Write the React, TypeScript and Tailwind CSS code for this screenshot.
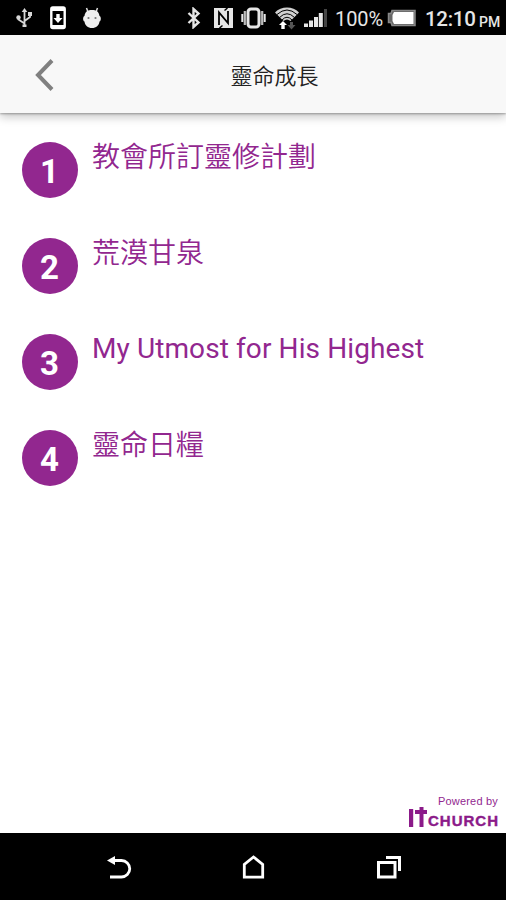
import React from 'react';

const plans = [
    { title: '教會所訂靈修計劃', style: 'mt-[2px] font-[350]' },
    { title: '荒漠甘泉', style: 'mt-[2px] font-[350]' },
    { title: 'My Utmost for His Highest', style: 'mt-px font-normal tracking-[0.1px]' },
    { title: '靈命日糧', style: 'mt-[2px] font-[350]' },
];

const UsbIcon = () => (
    <svg width="18" height="22" viewBox="0 0 18 22" className="ml-[15px]" fill="none" stroke="#d8d8d8" strokeWidth="1.8">
        <path d="M9.5 4v14M9.5 16.5l-6-4V10M9.5 14l5.5-4V7" />
        <path d="M9.5 1l2.800 4H6.700z" fill="#d8d8d8" stroke="none" />
        <circle cx="3.5" cy="10.5" r="2.2" fill="#d8d8d8" stroke="none" />
        <path d="M13 5h4v4h-4zM7.5 17.5h4V20h-4z" fill="#d8d8d8" stroke="none" />
    </svg>
);

const DownloadIcon = () => (
    <svg width="16" height="24" viewBox="0 0 16 24" className="ml-[17px]">
        <rect x="1.3" y="1.5" width="13.4" height="20.5" rx="1.5" fill="none" stroke="#fff" strokeWidth="2.4" />
        <path d="M1 1h14v4H1zM1 19h14v3H1z" fill="#fff" />
        <path d="M6.300 8h3.400v4h2.800L8 17l-4.500-5h2.800z" fill="#fff" />
    </svg>
);

const AndroidIcon = () => (
    <svg width="20" height="22" viewBox="0 0 20 22" className="ml-4">
        <path d="M4.5 1L6 5M15.5 1L14 5" stroke="#ddd" strokeWidth="1.5" />
        <path d="M2.500 9C3 4.500 6 3 10 3s7 1.500 7.500 6c1.800.5 1.800 5 0 5.500-.5 4-3.300 6.500-7.500 6.500s-7-2.500-7.500-6.500C.7 14 .7 9.500 2.500 9z" fill="#eee" />
        <circle cx="6.5" cy="11" r="1.100" fill="#777" />
        <circle cx="13.5" cy="11" r="1.100" fill="#777" />
    </svg>
);

const BluetoothIcon = () => (
    <svg width="14" height="22" viewBox="0 0 14 22" className="mr-px" fill="none" stroke="#e6e6e6" strokeWidth="2.4">
        <path d="M1.500 6l10 9.500-5 4.500V2l5 4.500L1.500 16" />
    </svg>
);

const NfcIcon = () => (
    <svg width="19" height="20" viewBox="0 0 19 20" className="ml-3">
        <path d="M0 0h19v20H0z" fill="#e6e6e6" />
        <path d="M5 17V4.500l9 10.500V3" fill="none" stroke="#000" strokeWidth="1.8" />
        <path d="M5.500 20l3-2.500M13.500 0l-3 2.500" stroke="#000" strokeWidth="1.5" />
    </svg>
);

const VibrateIcon = () => (
    <svg width="25" height="22" viewBox="0 0 25 22" className="ml-2" fill="none" stroke="#e6e6e6">
        <rect x="7" y="2" width="11" height="18" rx="3" strokeWidth="3" />
        <path d="M3.800 4v14M21.200 4v14" strokeWidth="2.2" stroke="#bbb" />
        <path d="M1.300 7v8M23.700 7v8" strokeWidth="2" />
    </svg>
);

const WifiIcon = () => (
    <svg width="26" height="24" viewBox="0 0 26 24" className="ml-2">
        <path d="M1 6.500C7-.2 19-.2 25 6.500L16.500 15q-3.500-3-7 0z" fill="#d0d0d0" />
        <path d="M3 8.500Q13-.5 23 8.500M5.500 11.500Q13 4 20.500 11.500M8 14Q13 8.500 18 14" fill="none" stroke="#000" strokeWidth="1" />
        <path d="M9 15l4 4h-2.300v4H7.300v-4H5z" fill="#fff" />
        <path d="M16 16h3v3h2.500l-4 4.500-4-4.500H16z" fill="#555" />
    </svg>
);

const SignalIcon = () => (
    <svg width="24" height="20" viewBox="0 0 24 20" className="ml-1">
        <path d="M0 15.500h4V19H0zM5 12.500h4V19H5zM10 9h4v10h-4zM14.800 5h4v14h-4z" fill="#e6e6e6" />
        <path d="M20 1h3v18h-3z" fill="#444" />
    </svg>
);

const BatteryIcon = () => (
    <svg width="30" height="18" viewBox="0 0 30 18" className="ml-1">
        <path d="M5 1.500h23v15H5l-1-3H1.500v-9H4z" fill="#666" stroke="#888" strokeWidth="1.5" />
        <path d="M7 3h19.500v12H7l-1.500-3V6z" fill="#fff" />
    </svg>
);

const StatusBar: React.FC = () => (
    <div className="flex h-[35px] items-center bg-black text-[#e6e6e6]">
        <UsbIcon />
        <DownloadIcon />
        <AndroidIcon />
        <div className="ml-auto flex items-center pr-[6px]">
            <BluetoothIcon />
            <NfcIcon />
            <VibrateIcon />
            <WifiIcon />
            <SignalIcon />
            <span className="ml-[7px] mt-[3px] w-[48px] text-[20px] leading-none tracking-[-0.1px]">100%</span>
            <BatteryIcon />
            <span className="ml-[8px] mt-[3px] w-[51px] whitespace-nowrap text-[20.5px] font-medium leading-none tracking-[-0.3px]">12:10</span>
            <span className="ml-[3px] mt-[8px] w-[21px] text-[14px] font-medium leading-none">PM</span>
        </div>
    </div>
);

const Header: React.FC = () => (
    <header className="grid h-[78px] grid-cols-[92px_1fr_49px] items-center bg-[#f8f8f8] shadow-[0_1px_2px_rgba(0,0,0,0.3),0_4px_9px_rgba(0,0,0,0.22)]">
        <svg width="20" height="34" viewBox="0 0 20 34" className="ml-[34px] mt-0.5" fill="none" stroke="#808080" strokeWidth="4">
            <path d="M18 2.500L4 17l14 14.500" />
        </svg>
        <h1 className="pt-1.5 text-center text-[22px] font-[350] leading-none text-[#222]">靈命成長</h1>
    </header>
);

const PlanRow: React.FC<{ index: number; title: string; style: string }> = ({ index, title, style }) => (
    <li className="flex h-24 items-start">
        <span className="flex size-14 shrink-0 items-center justify-center rounded-full bg-[#92278f] pr-px pt-[2px] text-[33px] font-bold leading-none text-white">
            {index}
        </span>
        <span className={`ml-[14px] whitespace-nowrap text-[28px] leading-7 text-[#92278f] ${style}`}>{title}</span>
    </li>
);

const NavBar: React.FC = () => (
    <nav className="flex h-[67px] items-center bg-black">
        <svg width="26" height="26" viewBox="0 0 26 26" className="ml-[106px]">
            <path d="M7 6.500h8.500a8 8 0 0 1 0 16.500H4" fill="none" stroke="#fff" strokeWidth="2.8" />
            <path d="M1 6.500L9 2v9z" fill="#fff" />
        </svg>
        <svg width="24" height="26" viewBox="0 0 24 26" className="ml-[110px]" fill="none" stroke="#fff" strokeWidth="2.8">
            <path d="M2.300 23.200V10.500L11.500 3l9.200 7.500v12.700z" />
        </svg>
        <svg width="26" height="26" viewBox="0 0 26 26" className="ml-[110px]" fill="none" stroke="#fff" strokeWidth="3">
            <path d="M2.500 8.500H19V23H2.500z" />
            <path d="M10 3.500h13.500V17" />
        </svg>
    </nav>
);

const App: React.FC = () => {
    return (
        <div className="flex h-[900px] w-[506px] flex-col overflow-hidden bg-white font-[Roboto,'Noto_Sans_CJK_TC',sans-serif]">
            <StatusBar />
            <Header />
            <main className="flex grow flex-col justify-between">
                <ul className="pl-[22px] pt-[29px]">
                    {plans.map((plan, i) => (
                        <PlanRow key={plan.title} index={i + 1} title={plan.title} style={plan.style} />
                    ))}
                </ul>
                <footer className="flex flex-col items-end pb-[6px] pr-[8px] font-['Liberation_Sans',sans-serif] text-[#92278f]">
                    <span className="text-[11px] leading-[11px] tracking-[0.2px]">Powered by</span>
                    <div className="flex h-[20px] items-end font-bold text-[#8b1a89]">
                        <svg width="19" height="20" viewBox="0 0 19 20" fill="currentColor">
                            <path d="M0 2h4.200v18H0zM6 3h4.500V0h4v3H18v4h-3.500v13h-4V7H6z" />
                        </svg>
                        <span className="-mr-px text-[15px] leading-[13px] tracking-[1px] [-webkit-text-stroke:0.4px_currentColor]">CHURCH</span>
                    </div>
                </footer>
            </main>
            <NavBar />
        </div>
    );
};

export default App;
